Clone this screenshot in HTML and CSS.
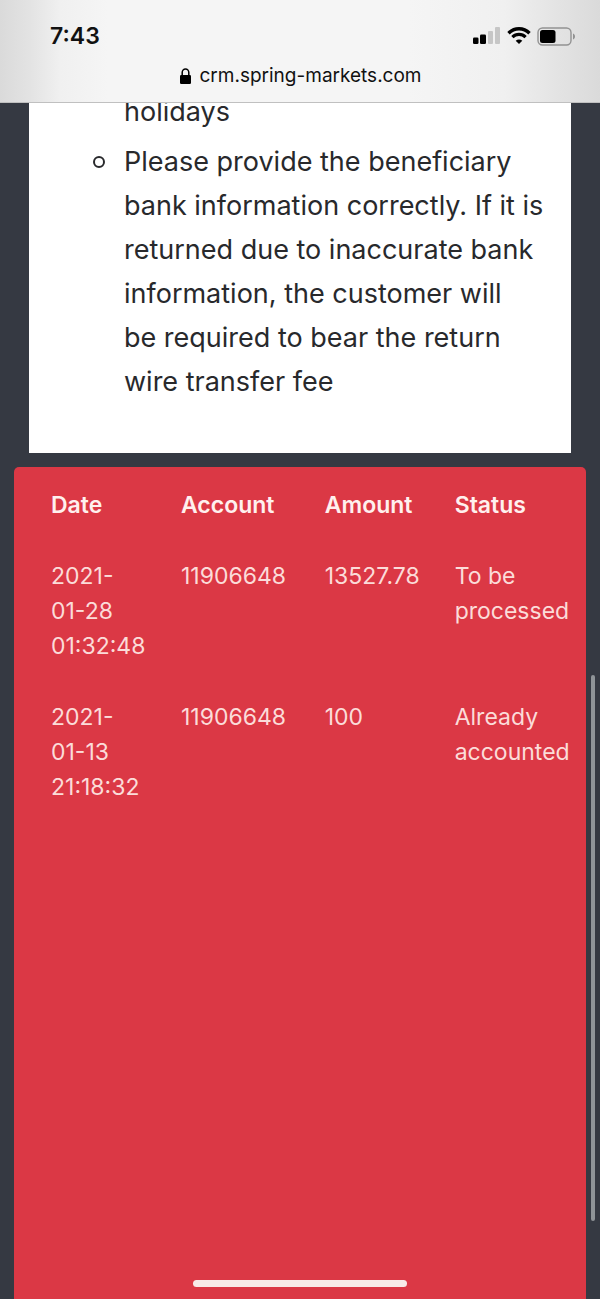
FILE: index.html
```
<!DOCTYPE html>
<html lang="en">
<head>
<meta charset="utf-8">
<meta name="viewport" content="width=device-width, initial-scale=1">
<title>crm.spring-markets.com</title>
<link rel="stylesheet" href="styles.css">
</head>
<body>
<header class="browser-bar">
  <div class="status">
    <time class="clock">7:43</time>
    <div class="indicators">
      <svg width="28" height="18" viewBox="0 0 28 18" aria-hidden="true">
        <rect x="0" y="10.500" width="5.500" height="6.500" rx="1.300"/>
        <rect x="7" y="7.500" width="6" height="9.500" rx="1.300"/>
        <rect x="15" y="4" width="5" height="13" rx="1" fill="#c6c6c6"/>
        <rect x="22" y="0" width="5" height="17" rx="1" fill="#c6c6c6"/>
      </svg>
      <svg width="24" height="18" viewBox="0 0 24 18" fill="none" stroke="#000" aria-hidden="true">
        <path d="M1.5 6.2C7.4.2 16.6.2 22.5 6.2" stroke-width="3.4"/>
        <path d="M5.4 10.2c3.7-3.7 9.500-3.7 13.200 0" stroke-width="3.200"/>
        <path d="M8.700 13.700c1.900-1.700 4.700-1.700 6.600 0L12 17z" fill="#000" stroke="none"/>
      </svg>
      <svg width="39" height="19" viewBox="0 0 39 19" aria-hidden="true">
        <rect x="1" y="1" width="33" height="17" rx="4.500" fill="none" stroke="#929292" stroke-width="1.400"/>
        <rect x="3" y="3" width="15.500" height="13" rx="2.500"/>
        <path d="M36 6.500c2.700 1 2.700 5 0 6z" fill="#929292"/>
      </svg>
    </div>
  </div>
  <div class="address">
    <svg width="11" height="17" viewBox="0 0 11 17" aria-hidden="true">
      <rect x="0" y="7" width="11" height="9" rx="1.200"/>
      <path d="M2.200 8V4.600a3.300 3.600 0 0 1 6.600 0V8" fill="none" stroke="#000" stroke-width="1.500"/>
    </svg>
    <span>crm.spring-markets.com</span>
  </div>
</header>
<main class="page">
  <section class="notice">
    <ul class="notes">
      <li class="continued">holidays</li>
      <li>Please provide the beneficiary<br>bank information correctly. If it is<br>returned due to inaccurate bank<br>information, the customer will<br>be required to bear the return<br>wire transfer fee</li>
    </ul>
  </section>
  <section class="records">
    <table class="history">
      <thead>
        <tr><th class="date" scope="col">Date</th><th class="account" scope="col">Account</th><th class="amount" scope="col">Amount</th><th scope="col">Status</th></tr>
      </thead>
      <tbody>
        <tr><td>2021-<br>01-28<br>01:32:48</td><td>11906648</td><td>13527.78</td><td>To be<br>processed</td></tr>
        <tr><td>2021-<br>01-13<br>21:18:32</td><td>11906648</td><td>100</td><td>Already<br>accounted</td></tr>
      </tbody>
    </table>
  </section>
</main>
<div class="scroll-thumb"></div>
<div class="home-indicator"></div>
</body>
</html>
```
FILE: styles.css
```
*,
*::before {
  box-sizing: border-box;
}

body {
  margin: 0;
  min-height: 100vh;
  display: flex;
  flex-direction: column;
  position: relative;
  background: #353942;
  color: #28292c;
  font-family: Inter, "Liberation Sans", sans-serif;
}

.browser-bar {
  padding: 21px 24px 13px 50px;
  border-bottom: 1px solid #c0c0c0;
  background: linear-gradient(90deg, #dadada 0, #e3e3e3 5%, #f0f0f0 10%, #f5f5f5 18%, #f5f5f5 68%, #f0f0f0 84%, #e2e2e2 94%, #dadada 100%);
  color: #111;
}

.status {
  display: flex;
  align-items: center;
  justify-content: space-between;
  height: 30px;
}

.clock {
  font-size: 23px;
  font-weight: 600;
}

.indicators {
  display: flex;
  align-items: center;
  gap: 6px;
}

.address {
  display: flex;
  align-items: center;
  justify-content: center;
  gap: 8px;
  margin: 12px 0 0;
  padding-right: 24px;
  font-size: 19px;
  line-height: 26px;
}

.page {
  flex: 1;
  display: flex;
  flex-direction: column;
  gap: 14px;
  padding: 0 14px;
}

.notice {
  margin: 0 15px;
  padding: 0 24px 49px 95px;
  overflow: hidden;
  background: #fff;
}

.notes {
  display: flex;
  flex-direction: column;
  gap: 6px;
  margin: -13px 0 0;
  padding: 0;
  list-style: none;
  font-size: 27px;
  line-height: 44px;
  white-space: nowrap;
}

.notes li {
  position: relative;
}

.notes li::before {
  content: "";
  position: absolute;
  top: 16px;
  left: -31px;
  width: 12px;
  height: 12px;
  border: 2px solid #28292c;
  border-radius: 50%;
}

.notes .continued::before {
  display: none;
}

.records {
  flex: 1;
  padding: 3px 0 0 19px;
  border-radius: 5px 5px 0 0;
  background: #db3845;
}

.history {
  width: 100%;
  table-layout: fixed;
  border-collapse: collapse;
  color: #fbdcd9;
  font-size: 23px;
  line-height: 35px;
}

.history th,
.history td {
  padding: 18px 0 18px 18px;
  text-align: left;
  vertical-align: top;
}

.history th {
  color: #fff0ee;
  font-weight: 600;
}

.history .date {
  width: 23.5%;
}

.history .account {
  width: 26%;
}

.history .amount {
  width: 23.5%;
}

.scroll-thumb {
  position: absolute;
  top: 52%;
  right: 5px;
  width: 4px;
  height: 42%;
  border-radius: 2px;
  background: #8f9498;
}

.home-indicator {
  position: absolute;
  bottom: 12px;
  left: 50%;
  width: 214px;
  height: 7px;
  margin-left: -107px;
  border-radius: 4px;
  background: #f8eae8;
}
```
